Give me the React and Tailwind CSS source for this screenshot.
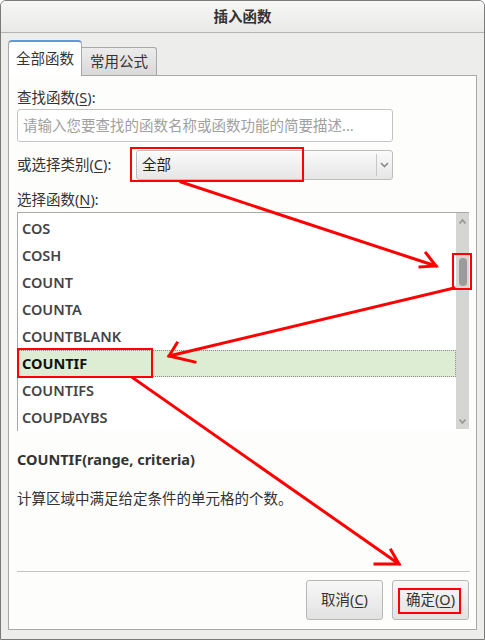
import React from "react";

const FONT = { fontFamily: '"Noto Sans", "Noto Sans CJK SC", sans-serif' };

const FUNCS = ["COS", "COSH", "COUNT", "COUNTA", "COUNTBLANK", "COUNTIF", "COUNTIFS", "COUPDAYBS"];

function Hotkey({ label, k }) {
  return (
    <span>
      {label}(<span className="underline underline-offset-2">{k}</span>)
    </span>
  );
}

function Annotations() {
  // red marks drawn over the dialog
  return (
    <svg className="absolute inset-0 pointer-events-none" width="485" height="640" viewBox="0 0 485 640">
      <g fill="none" stroke="#ff0000" strokeLinecap="square">
        <rect x="130" y="147" width="172" height="33" strokeWidth="2" />
        <rect x="452" y="253" width="18" height="35" strokeWidth="2" />
        <rect x="17" y="348" width="134" height="28" strokeWidth="2" />
        <rect x="398" y="588" width="61" height="24" strokeWidth="2" />
        <g strokeWidth="3">
          <path d="M180 181 L435 265 M419 266 L435 265 L425 252" />
          <path d="M453 287 L168 355 M176 342 L168 355 L194 361" />
          <path d="M132 377 L398 563 M374 563 L398 563 L390 549" />
        </g>
      </g>
    </svg>
  );
}

export default function App() {
  return (
    <div
      className="relative w-[485px] h-[640px] bg-[#ededeb] border border-[#7a7a7a] rounded-t-[6px] overflow-hidden text-[14.5px] text-[#333]"
      style={FONT}
    >
      {/* title bar */}
      <div className="h-[32px] pt-px flex items-center justify-center border-b border-[#b4b4b2] bg-gradient-to-b from-[#f7f7f5] to-[#e9e9e7]">
        <span className="font-bold text-[#333]">插入函数</span>
      </div>

      {/* tabs */}
      <div className="flex items-end pl-[7px] mt-[7px] h-[35px] relative z-10">
        <div className="w-[74px] bg-white border border-[#a8a8a8] border-b-0 border-t-2 border-t-[#5b9bdd] rounded-t-[4px] flex items-center justify-center mb-[-1px] h-[36px]">
          全部函数
        </div>
        <div className="w-[75px] h-[28px] border border-[#a8a8a8] border-l-0 border-b-0 rounded-tr-[3px] bg-gradient-to-b from-[#ececec] to-[#d9d9d9] flex items-center justify-center">
          常用公式
        </div>
      </div>

      {/* panel */}
      <div className="ml-[7px] w-[469px] h-[555px] bg-[#fdfdfc] border border-[#a8a8a8] px-[8px] flex flex-col">
        <div className="mt-[11px] h-[20px] leading-[20px]">
          <Hotkey label="查找函数" k="S" />:
        </div>
        <div className="mt-[2px] w-[376px] h-[33px] border border-[#c4c4c4] rounded-[3px] flex items-center pl-[5px] text-[#a0a0a0] bg-white">
          请输入您要查找的函数名称或函数功能的简要描述...
        </div>

        <div className="mt-[8px] h-[30px] flex items-center">
          <div className="w-[119px]">
            <Hotkey label="或选择类别" k="C" />:
          </div>
          <div className="w-[257px] h-[30px] border border-[#bdbdbd] rounded-[3px] bg-gradient-to-b from-[#fbfbfb] to-[#e6e6e6] flex items-center">
            <span className="flex-1 pl-[5px] text-[#222]">全部</span>
            <span className="w-px h-[22px] bg-[#c8c8c8]" />
            <span className="w-[15px] flex items-center justify-center">
              <svg width="9" height="6" viewBox="0 0 9 6">
                <path d="M1 1 L4.5 4.5 L8 1" fill="none" stroke="#8a8a8a" strokeWidth="1.6" />
              </svg>
            </span>
          </div>
        </div>

        <div className="mt-[9px] h-[20px] leading-[20px]">
          <Hotkey label="选择函数" k="N" />:
        </div>

        {/* function list */}
        <div className="mt-[3px] w-[452px] h-[219px] border-t border-l border-[#a8a8a8] flex bg-white">
          <div className="flex-1 pt-[2px]">
            {FUNCS.map((f) =>
              f === "COUNTIF" ? (
                <div
                  key={f}
                  className="h-[27px] flex items-center pl-[3px] bg-[#ddedd4] border border-dotted border-[#8a8a8a] font-bold text-[#111]"
                >
                  {f}
                </div>
              ) : (
                <div key={f} className="h-[27px] flex items-center pl-[4px] font-semibold text-[#444]">
                  {f}
                </div>
              )
            )}
          </div>
          <div className="w-[13px] mb-[2px] bg-[#d5d5d3] flex flex-col items-center">
            <svg className="mt-[6px]" width="7" height="5" viewBox="0 0 7 5">
              <path d="M0.5 4.5 L3.5 1 L6.5 4.5" fill="none" stroke="#999" strokeWidth="1.8" />
            </svg>
            <div className="mt-[34px] w-[8px] h-[28px] rounded-full bg-[#9b9b9b]" />
            <div className="flex-1" />
            <svg className="mb-[5px]" width="7" height="5" viewBox="0 0 7 5">
              <path d="M0.5 0.5 L3.5 4 L6.5 0.5" fill="none" stroke="#999" strokeWidth="1.8" />
            </svg>
          </div>
        </div>

        <div className="mt-[18px] h-[20px] leading-[20px] font-bold text-[#333]">
          COUNTIF(range, criteria)
        </div>
        <div className="mt-[19px] h-[20px] leading-[20px] text-[#333]">
          计算区域中满足给定条件的单元格的个数。
        </div>

        <div className="mt-[63px] w-[453px] h-px bg-[#c4c4c4]" />

        <div className="mt-[8px] flex justify-end gap-[9px] w-[452px]">
          <button className="w-[77px] h-[40px] border border-[#b8b8b8] rounded-[3px] bg-gradient-to-b from-[#f8f8f8] to-[#e2e2e2] text-[#333]">
            <Hotkey label="取消" k="C" />
          </button>
          <button className="w-[77px] h-[40px] border border-[#b8b8b8] rounded-[3px] bg-gradient-to-b from-[#f8f8f8] to-[#e2e2e2] text-[#333]">
            <Hotkey label="确定" k="O" />
          </button>
        </div>
      </div>

      <Annotations />
    </div>
  );
}
